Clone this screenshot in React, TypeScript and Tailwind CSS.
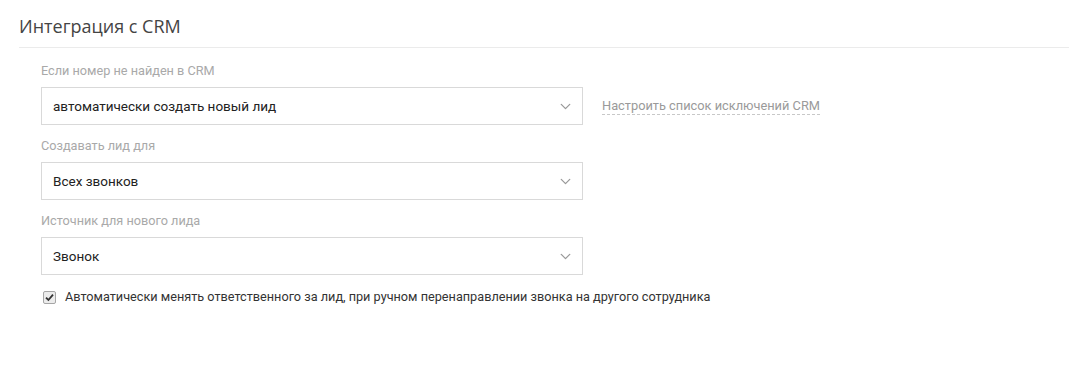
import { ChevronDown } from 'lucide-react';

const roboto = { fontFamily: 'Roboto, "Liberation Sans", sans-serif' };

function Field({ label, value, extra }: { label: string; value: string; extra?: React.ReactNode }) {
  return (
    <div className="flex flex-col">
      <div className="h-[20px] text-[12.7px] leading-[20px] text-[#a9a9a9]">{label}</div>
      <div className="flex items-center mt-[6px]">
        <div className="w-[542px] h-[38px] border border-[#d9d9d9] bg-white flex items-center justify-between pl-[11px] pr-[8px] text-[13.5px] text-[#222]">
          <span>{value}</span>
          <ChevronDown size={17} strokeWidth={1.8} className="text-[#999]" />
        </div>
        {extra}
      </div>
    </div>
  );
}

export default function App() {
  return (
    <div className="w-[1070px] h-[371px] bg-white" style={roboto}>
      <div className="pl-[19px] pt-[13px]">
        <h2
          className="text-[18px] leading-[26px] text-[#444] font-normal"
          style={{ fontFamily: '"Open Sans", sans-serif' }}
        >
          Интеграция с CRM
        </h2>
        <div className="mt-[8px] h-px bg-[#ebebeb] mr-[1px]" />

        {/* form */}
        <div className="pl-[22px] pt-[13px] flex flex-col gap-[11px]">
          <Field
            label="Если номер не найден в CRM"
            value="автоматически создать новый лид"
            extra={
              <span className="ml-[19px] text-[12.8px] text-[#9a9a9a] border-b border-dashed border-[#c8c8c8] leading-[16px]">
                Настроить список исключений CRM
              </span>
            }
          />
          <Field label="Создавать лид для" value="Всех звонков" />
          <Field label="Источник для нового лида" value="Звонок" />

          <label className="flex items-center gap-[9px] mt-[3px] text-[12.7px] leading-[16px] text-[#333]">
            <span className="w-[13px] h-[13px] ml-[2px] border border-[#a6a6a6] rounded-[2px] bg-[#ececec] flex items-center justify-center">
              <svg width="9" height="9" viewBox="0 0 9 9">
                <path d="M1 4.6 L3.4 7 L8 1.6" fill="none" stroke="#333" strokeWidth="1.8" />
              </svg>
            </span>
            Автоматически менять ответственного за лид, при ручном перенаправлении звонка на другого сотрудника
          </label>
        </div>
      </div>
    </div>
  );
}
